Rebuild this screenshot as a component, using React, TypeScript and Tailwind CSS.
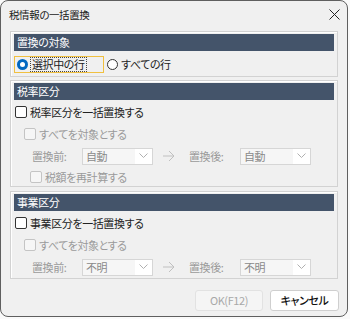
import { useState } from 'react';

function Chevron() {
  return (
    <svg width="9" height="6" viewBox="0 0 9 6" className="text-[#b0b0b0]">
      <path d="M0.5 0.5 L4.5 4.5 L8.5 0.5" fill="none" stroke="currentColor" strokeWidth="1" />
    </svg>
  );
}

function Select({ value }: { value: string }) {
  return (
    <div className="flex h-[17px] w-[71px] items-center border border-[#d6d6d6] bg-[#f6f6f6] pl-[3px] text-[11px] text-[#8a8a8a]">
      <span className="flex-1 leading-none">{value}</span>
      <span className="flex h-full w-[17px] items-center justify-center bg-white">
        <Chevron />
      </span>
    </div>
  );
}

function Box({ disabled }: { disabled?: boolean }) {
  return (
    <span
      className={
        'inline-block h-[12px] w-[12px] shrink-0 rounded-[2px] border ' +
        (disabled ? 'border-[#c4c4c4] bg-[#f6f6f6]' : 'border-[#333] bg-white')
      }
    />
  );
}

function Group({ title, children, className = '' }: { title: string; children: React.ReactNode; className?: string }) {
  return (
    <div className={'border border-[#d2d2d2] px-[3px] pt-[2px] shadow-[inset_1px_1px_0_#fff] ' + className}>
      <div className="flex h-[17px] items-center bg-[#44546a] pl-[3px] text-[11px] leading-none text-white">
        {title}
      </div>
      {children}
    </div>
  );
}

function ReplaceRows({ label, value, recalc }: { label: string; value: string; recalc?: boolean }) {
  return (
    <div className={recalc ? 'pb-[1px]' : 'pb-[2px]'}>
      <div className="mt-[4px] flex h-[16px] items-center gap-[2px] pl-[1px] text-[#222]">
        <Box />
        <span className="ml-[1px]">{label}を一括置換する</span>
      </div>
      <div className="mt-[6px] flex h-[16px] items-center gap-[3px] pl-[10px] text-[#9a9a9a]">
        <Box disabled />
        <span>すべてを対象とする</span>
      </div>
      <div className="mt-[5px] flex h-[18px] items-center text-[#9a9a9a]">
        <span className="ml-[18px] w-[50px]">置換前:</span>
        <Select value={value} />
        <svg width="12" height="12" viewBox="0 0 12 12" className="ml-[10px] text-[#c0c0c0]">
          <path d="M0 6 H11 M6 1 L11 6 L6 11" fill="none" stroke="currentColor" strokeWidth="1" />
        </svg>
        <span className="ml-[14px] w-[51px]">置換後:</span>
        <Select value={value} />
      </div>
      {recalc && (
        <div className="mt-[4px] flex h-[16px] items-center gap-[3px] pl-[16px] text-[#9a9a9a]">
          <Box disabled />
          <span>税額を再計算する</span>
        </div>
      )}
    </div>
  );
}

function Radio({ on }: { on: boolean }) {
  return (
    <span
      className={
        'flex h-[11px] w-[11px] shrink-0 items-center justify-center rounded-full ' +
        (on ? 'bg-[#0067c0]' : 'border border-[#333] bg-white')
      }
    >
      {on && <span className="h-[5px] w-[5px] rounded-full bg-white" />}
    </span>
  );
}

export default function App() {
  const [target, setTarget] = useState('sel');

  return (
    <div className="h-[319px] w-[350px] bg-[#fafafa] font-['Noto_Sans_CJK_JP','Noto_Sans',sans-serif] text-[11px] tracking-[-0.4px] [font-feature-settings:'palt']">
      <div className="flex h-[317px] w-[348px] flex-col rounded-lg border border-[#5f5f5f] bg-[#f0f0f0]">
        <div className="flex h-[27px] items-center justify-between pl-[8px] pr-[7px] text-[10.5px] text-[#222]">
          <span>税情報の一括置換</span>
          <svg width="11" height="11" viewBox="0 0 11 11">
            <path d="M0.5 0.5 L10.5 10.5 M10.5 0.5 L0.5 10.5" stroke="#222" strokeWidth="1" />
          </svg>
        </div>

        <div className="mx-[9px] mt-[3px] flex flex-col gap-[3px]">
          <Group title="置換の対象">
            <div className="flex h-[25px] items-center pt-[2px] text-[#222]">
              <button
                onClick={() => setTarget('sel')}
                className="flex h-[17px] w-[90px] items-center gap-[2px] border border-[#f0c040] pl-[2px]"
              >
                <Radio on={target === 'sel'} />
                <span className="border border-dotted border-[#444] px-[1px] leading-[13px]">選択中の行</span>
              </button>
              <button onClick={() => setTarget('all')} className="ml-[3px] flex items-center gap-[3px]">
                <Radio on={target === 'all'} />
                <span>すべての行</span>
              </button>
            </div>
          </Group>

          <Group title="税率区分">
            <ReplaceRows label="税率区分" value="自動" recalc />
          </Group>

          <Group title="事業区分" className="mt-[1px]">
            <ReplaceRows label="事業区分" value="不明" />
          </Group>
        </div>

        <div className="mr-[8px] mt-[11px] flex justify-end gap-[7px]">
          <button disabled className="h-[21px] w-[68px] rounded-[3px] border border-[#e2e2e2] bg-[#f5f5f5] text-[#a8a8a8]">
            OK(F12)
          </button>
          <button className="h-[21px] w-[69px] rounded-[3px] border border-[#cfcfcf] bg-white font-medium text-[#111]">
            キャンセル
          </button>
        </div>
      </div>
    </div>
  );
}
